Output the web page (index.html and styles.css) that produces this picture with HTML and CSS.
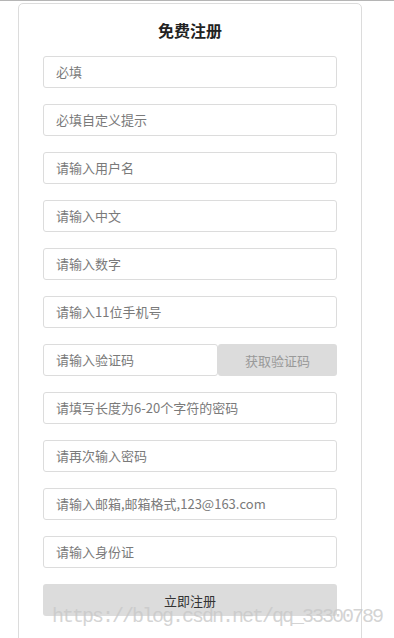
FILE: index.html
```html
<!DOCTYPE html>
<html lang="zh-CN">
<head>
    <meta charset="UTF-8">
    <meta name="viewport" content="width=device-width, initial-scale=1.0">
    <title>免费注册</title>
    <link rel="stylesheet" href="styles.css">
</head>
<body>

<div class="topline"></div>
<div class="container">
    <h2>免费注册</h2>
    <form class="form">
        <input class="field" type="text" placeholder="必填">
        <input class="field" type="text" placeholder="必填自定义提示">
        <input class="field" type="text" placeholder="请输入用户名">
        <input class="field" type="text" placeholder="请输入中文">
        <input class="field" type="text" placeholder="请输入数字">
        <input class="field" type="text" placeholder="请输入11位手机号">
        <div class="code-row">
            <input class="field code" type="text" placeholder="请输入验证码">
            <button class="code-btn" type="button">获取验证码</button>
        </div>
        <input class="field" type="password" placeholder="请填写长度为6-20个字符的密码">
        <input class="field" type="password" placeholder="请再次输入密码">
        <input class="field" type="text" placeholder="请输入邮箱,邮箱格式,123@163.com">
        <input class="field" type="text" placeholder="请输入身份证">
        <button class="submit" type="button">立即注册</button>
    </form>
</div>
<div class="watermark">https://blog.csdn.net/qq_33300789</div>

</body>
</html>
```

FILE: styles.css
```css
body {
    font-family: "Noto Sans CJK SC", "Noto Sans", sans-serif;
    background-color: #ffffff;
    margin: 0;
    padding: 0;
    color: #333;
    height: 638px;
    overflow: hidden;
    position: relative;
}
.topline {
    height: 1px;
    background: #b5b5b5;
}
.container {
    width: 294px;
    margin: 2px 0 0 18px;
    padding: 16px 24px 40px 24px;
    border: 1px solid #dcdcdc;
    border-radius: 5px;
}
h2 {
    margin: 0 0 16px 0;
    height: 20px;
    line-height: 20px;
    font-size: 16px;
    font-weight: bold;
    text-align: center;
    color: #222;
}
.form {
    display: flex;
    flex-direction: column;
    gap: 16px;
}
.field {
    box-sizing: border-box;
    height: 32px;
    width: 100%;
    margin: 0;
    padding: 0 12px 1px 12px;
    border: 1px solid #dcdcdc;
    border-radius: 3px;
    font-family: inherit;
    font-size: 13px;
    color: #555;
    outline: none;
}
.field::placeholder {
    color: #7a7a7a;
}
.code-row {
    display: flex;
}
.field.code {
    width: 175px;
    flex: none;
}
.code-btn {
    flex: 1;
    height: 32px;
    border: none;
    border-radius: 3px;
    background-color: #dcdcdc;
    color: #999;
    font-family: inherit;
    font-size: 13px;
}
.submit {
    height: 32px;
    border: none;
    border-radius: 3px;
    background-color: #dcdcdc;
    color: #333;
    font-family: inherit;
    font-size: 13px;
}
.watermark {
    position: absolute;
    left: 52px;
    top: 605px;
    font-family: "Liberation Mono", monospace;
    font-size: 20px;
    letter-spacing: -2px;
    line-height: 24px;
    color: rgba(200, 200, 200, 0.8);
    white-space: nowrap;
}
```
